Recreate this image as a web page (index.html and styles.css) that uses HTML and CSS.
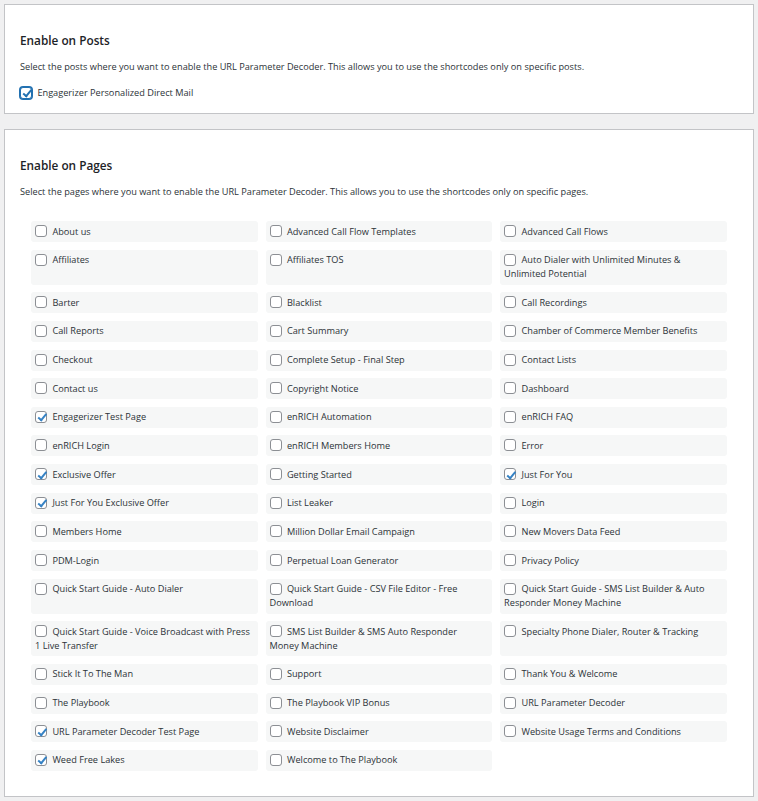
FILE: index.html
```html
<!DOCTYPE html>
<html lang="en">
<head>
    <meta charset="UTF-8">
    <meta name="viewport" content="width=device-width, initial-scale=1.0">
    <title>URL Parameter Decoder Settings</title>
    <link rel="stylesheet" href="styles.css">
</head>
<body>
    <div class="wrap">
        <div class="panel panel-posts">
            <h2>Enable on Posts</h2>
            <p class="description">Select the posts where you want to enable the URL Parameter Decoder. This allows you to use the shortcodes only on specific posts.</p>
            <label class="post-option">
                <input type="checkbox" class="focused" checked> Engagerizer Personalized Direct Mail
            </label>
        </div>

        <div class="panel panel-pages">
            <h2>Enable on Pages</h2>
            <p class="description">Select the pages where you want to enable the URL Parameter Decoder. This allows you to use the shortcodes only on specific pages.</p>
            <div class="page-grid">
                <label class="page-item"><input type="checkbox"> About us</label>
                <label class="page-item"><input type="checkbox"> Advanced Call Flow Templates</label>
                <label class="page-item"><input type="checkbox"> Advanced Call Flows</label>
                <label class="page-item"><input type="checkbox"> Affiliates</label>
                <label class="page-item"><input type="checkbox"> Affiliates TOS</label>
                <label class="page-item"><input type="checkbox"> Auto Dialer with Unlimited Minutes &amp; Unlimited Potential</label>
                <label class="page-item"><input type="checkbox"> Barter</label>
                <label class="page-item"><input type="checkbox"> Blacklist</label>
                <label class="page-item"><input type="checkbox"> Call Recordings</label>
                <label class="page-item"><input type="checkbox"> Call Reports</label>
                <label class="page-item"><input type="checkbox"> Cart Summary</label>
                <label class="page-item"><input type="checkbox"> Chamber of Commerce Member Benefits</label>
                <label class="page-item"><input type="checkbox"> Checkout</label>
                <label class="page-item"><input type="checkbox"> Complete Setup - Final Step</label>
                <label class="page-item"><input type="checkbox"> Contact Lists</label>
                <label class="page-item"><input type="checkbox"> Contact us</label>
                <label class="page-item"><input type="checkbox"> Copyright Notice</label>
                <label class="page-item"><input type="checkbox"> Dashboard</label>
                <label class="page-item"><input type="checkbox" checked> Engagerizer Test Page</label>
                <label class="page-item"><input type="checkbox"> enRICH Automation</label>
                <label class="page-item"><input type="checkbox"> enRICH FAQ</label>
                <label class="page-item"><input type="checkbox"> enRICH Login</label>
                <label class="page-item"><input type="checkbox"> enRICH Members Home</label>
                <label class="page-item"><input type="checkbox"> Error</label>
                <label class="page-item"><input type="checkbox" checked> Exclusive Offer</label>
                <label class="page-item"><input type="checkbox"> Getting Started</label>
                <label class="page-item"><input type="checkbox" checked> Just For You</label>
                <label class="page-item"><input type="checkbox" checked> Just For You Exclusive Offer</label>
                <label class="page-item"><input type="checkbox"> List Leaker</label>
                <label class="page-item"><input type="checkbox"> Login</label>
                <label class="page-item"><input type="checkbox"> Members Home</label>
                <label class="page-item"><input type="checkbox"> Million Dollar Email Campaign</label>
                <label class="page-item"><input type="checkbox"> New Movers Data Feed</label>
                <label class="page-item"><input type="checkbox"> PDM-Login</label>
                <label class="page-item"><input type="checkbox"> Perpetual Loan Generator</label>
                <label class="page-item"><input type="checkbox"> Privacy Policy</label>
                <label class="page-item"><input type="checkbox"> Quick Start Guide - Auto Dialer</label>
                <label class="page-item"><input type="checkbox"> Quick Start Guide - CSV File Editor - Free Download</label>
                <label class="page-item"><input type="checkbox"> Quick Start Guide - SMS List Builder &amp; Auto Responder Money Machine</label>
                <label class="page-item"><input type="checkbox"> Quick Start Guide - Voice Broadcast with Press 1 Live Transfer</label>
                <label class="page-item"><input type="checkbox"> SMS List Builder &amp; SMS Auto Responder Money Machine</label>
                <label class="page-item"><input type="checkbox"> Specialty Phone Dialer, Router &amp; Tracking</label>
                <label class="page-item"><input type="checkbox"> Stick It To The Man</label>
                <label class="page-item"><input type="checkbox"> Support</label>
                <label class="page-item"><input type="checkbox"> Thank You &amp; Welcome</label>
                <label class="page-item"><input type="checkbox"> The Playbook</label>
                <label class="page-item"><input type="checkbox"> The Playbook VIP Bonus</label>
                <label class="page-item"><input type="checkbox"> URL Parameter Decoder</label>
                <label class="page-item"><input type="checkbox" checked> URL Parameter Decoder Test Page</label>
                <label class="page-item"><input type="checkbox"> Website Disclaimer</label>
                <label class="page-item"><input type="checkbox"> Website Usage Terms and Conditions</label>
                <label class="page-item"><input type="checkbox" checked> Weed Free Lakes</label>
                <label class="page-item"><input type="checkbox"> Welcome to The Playbook</label>
            </div>
        </div>
    </div>
</body>
</html>
```
FILE: styles.css
```css
body {
    margin: 0;
    background-color: #f0f0f1;
    font-family: "Open Sans", "Noto Sans", sans-serif;
    font-size: 9.2px;
    line-height: 14px;
    color: #3c434a;
}
.wrap {
    padding: 4px 4px 0;
}
.panel {
    background-color: #fff;
    border: 1px solid #c3c4c7;
    padding: 26px 15px 13px;
}
.panel-pages {
    margin-top: 15px;
    padding-bottom: 25px;
}
h2 {
    margin: 0;
    font-size: 11.8px;
    line-height: 18px;
    font-weight: 600;
    color: #1d2327;
}
.description {
    margin: 11px 0 0;
    color: #2c3338;
}
.panel-pages .description {
    margin-top: 11px;
}
.post-option {
    display: block;
    margin-top: 12px;
    color: #2c3338;
}
input[type="checkbox"] {
    -webkit-appearance: none;
    appearance: none;
    position: relative;
    width: 12px;
    height: 12px;
    margin: 0 3px 0 0;
    border: 1px solid #8c8f94;
    border-radius: 3px;
    background: #fff;
    vertical-align: -2.5px;
}
input[type="checkbox"]:checked::before {
    content: "";
    position: absolute;
    left: 3.5px;
    top: 0.5px;
    width: 3px;
    height: 6.5px;
    border-right: 2px solid #3582c4;
    border-bottom: 2px solid #3582c4;
    transform: rotate(40deg);
}
input.focused {
    border-color: #2271b1;
    box-shadow: 0 0 0 1px #2271b1;
}
input.focused:checked::before {
    border-color: #2271b1;
}
.page-grid {
    display: grid;
    grid-template-columns: repeat(3, 1fr);
    gap: 7.65px;
    margin: 22px 11px 0;
}
.page-item {
    display: block;
    padding: 3.5px 4px;
    background-color: #f6f7f7;
    border-radius: 3px;
    color: #2c3338;
}
```
